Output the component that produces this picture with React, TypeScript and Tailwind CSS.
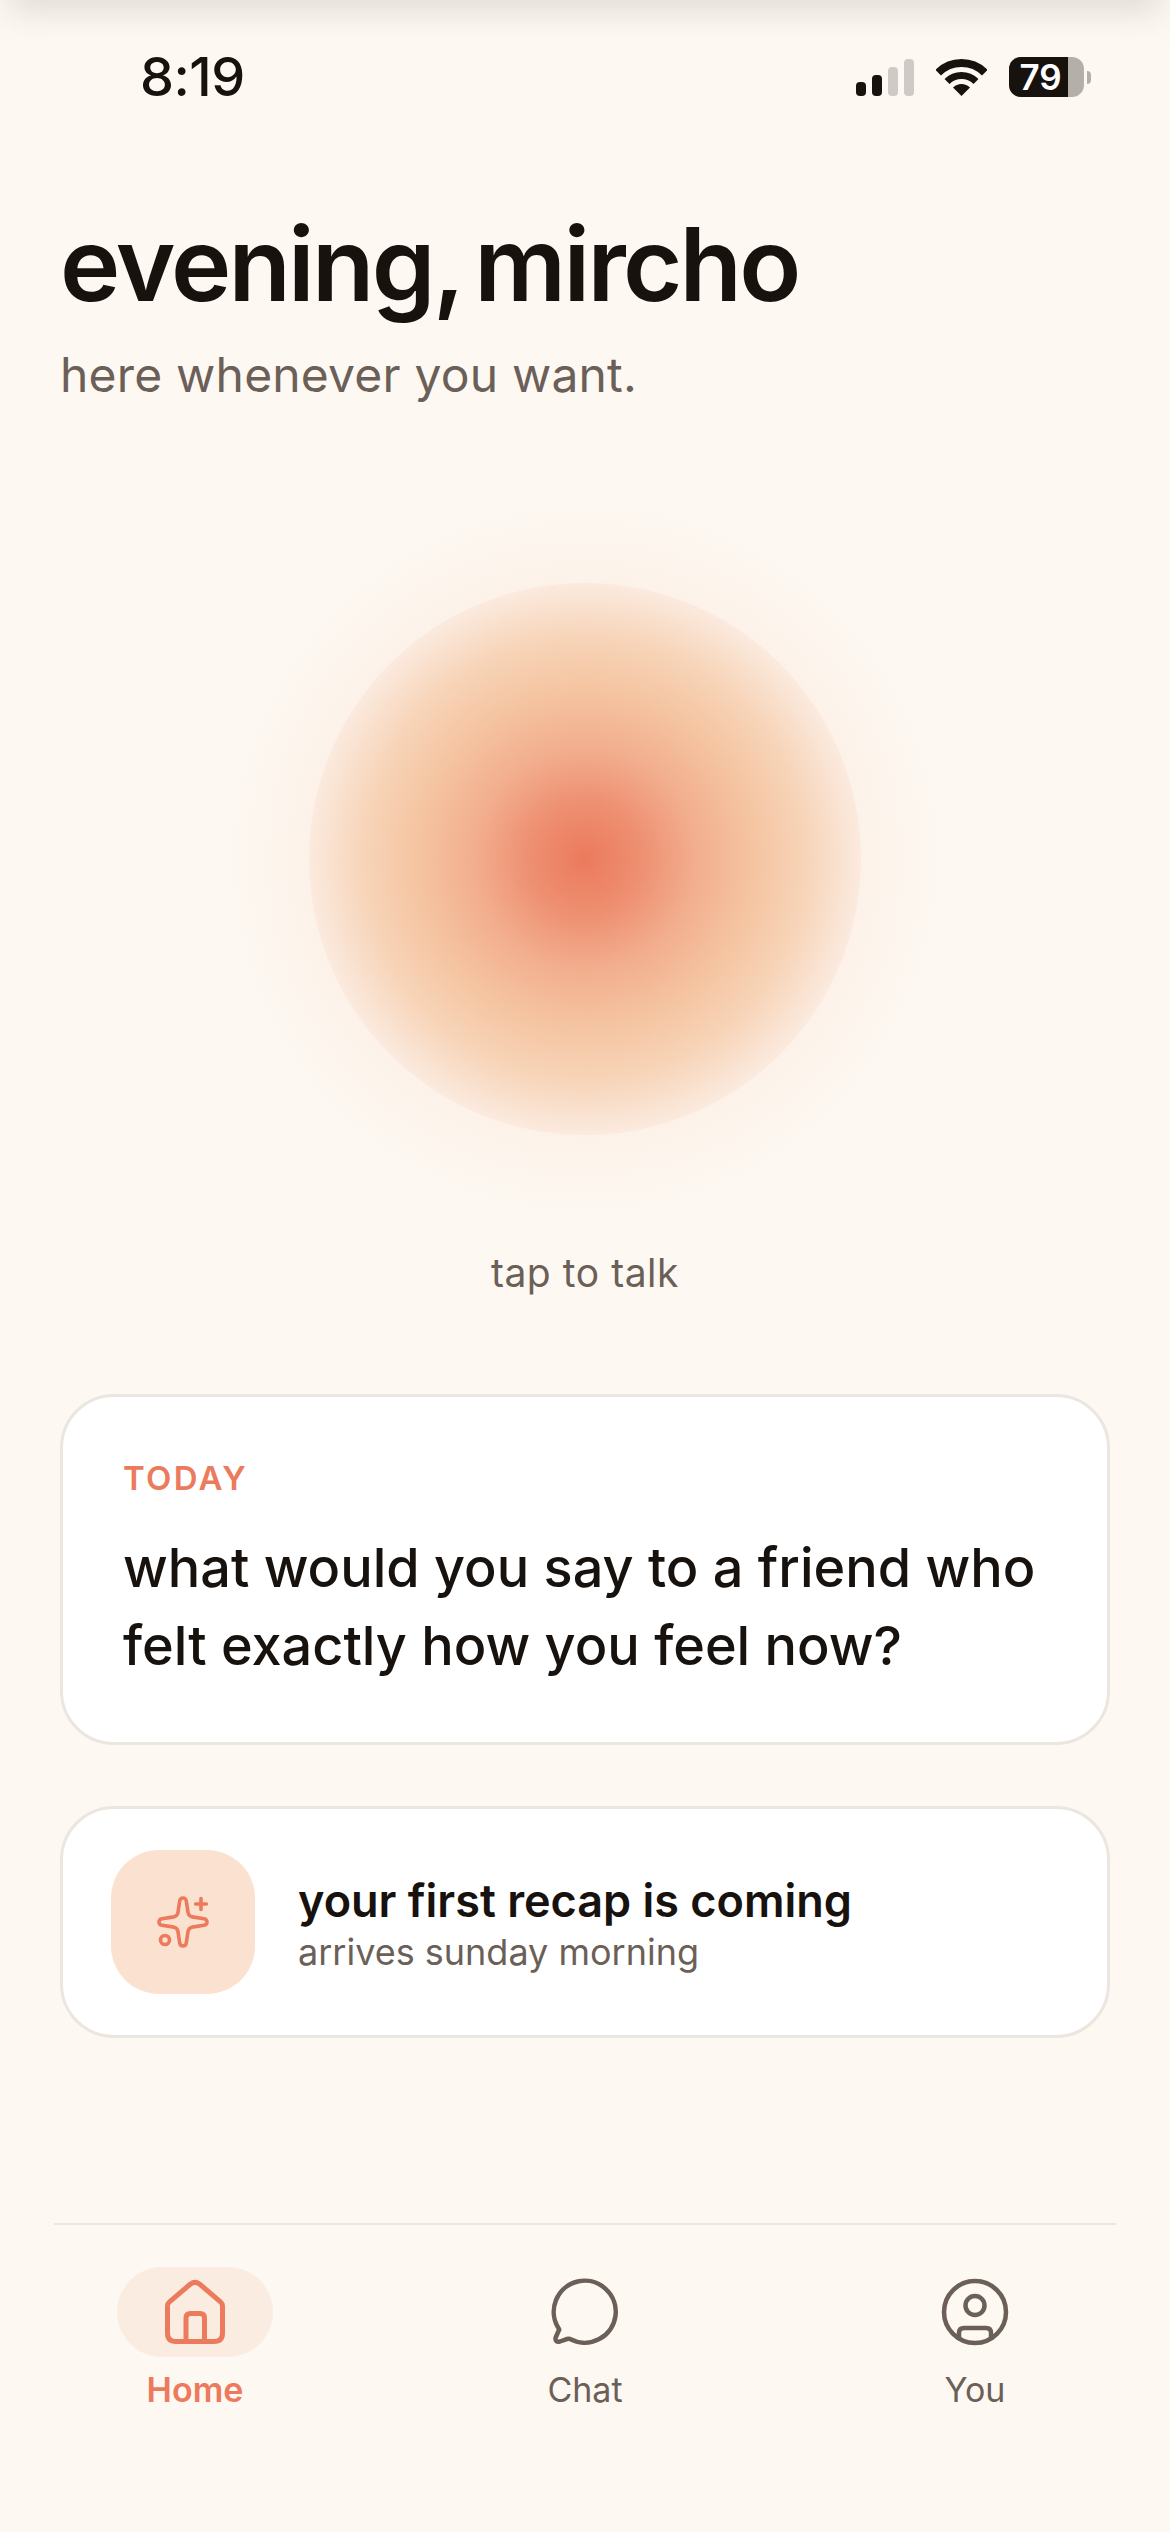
const inter = "font-['Inter','Noto_Sans',sans-serif]";

function Signal() {
  return (
    <div className="flex items-end gap-[6px] h-[37px]">
      <div className="w-[10px] h-[14px] rounded-[4px] bg-[#17120e]" />
      <div className="w-[10px] h-[21px] rounded-[4px] bg-[#17120e]" />
      <div className="w-[10px] h-[29px] rounded-[4px] bg-[#cfcac5]" />
      <div className="w-[10px] h-[37px] rounded-[4px] bg-[#cfcac5]" />
    </div>
  );
}

function Wifi() {
  return (
    <svg width="51" height="37" viewBox="0 0 51 37" fill="none">
      <path d="M2.2 13.7A33 33 0 0 1 48.8 13.7" stroke="#17120e" strokeWidth="8" />
      <path d="M11 22.5A20.5 20.5 0 0 1 40 22.5" stroke="#17120e" strokeWidth="7" />
      <path d="M25.5 37L17 28.5A12 12 0 0 1 34 28.5Z" fill="#17120e" />
    </svg>
  );
}

function Battery() {
  return (
    <div className="flex items-center gap-[3px]">
      <div className="relative flex h-[40px] w-[75px] overflow-hidden rounded-[12px] bg-[#b5afaa]">
        <div className="flex h-full w-[59px] items-center justify-center bg-[#17120e] pl-[4px]">
          <span className={`${inter} text-[35px] font-semibold leading-none text-white`}>79</span>
        </div>
      </div>
      <div className="h-[13px] w-[4px] rounded-r-full bg-[#b5afaa]" />
    </div>
  );
}

function HomeIcon() {
  return (
    <svg width="72" height="72" viewBox="0 0 72 72" fill="none" stroke="#ec7a5c" strokeWidth="5" strokeLinecap="round" strokeLinejoin="round">
      <path d="M8.5 30Q8.5 27.5 10.5 25.8L31.5 8Q36 4.7 40.5 8L61.5 25.8Q63.5 27.5 63.5 30V57Q63.5 65.5 55 65.5H17Q8.5 65.5 8.5 57Z" />
      <path d="M27 65.5V42Q27 37.5 31.5 37.5H41Q45.5 37.5 45.5 42V65.5" />
    </svg>
  );
}

function ChatIcon() {
  return (
    <svg width="72" height="72" viewBox="0 0 72 72" fill="none" stroke="#6b5f57" strokeWidth="4.5" strokeLinecap="round" strokeLinejoin="round">
      <path d="M10 53A31 31 0 1 1 21 63Q19.5 62.5 18 63L11 65.5Q6 66.5 6.5 62L9.5 55Q10.5 54 10 53Z" />
    </svg>
  );
}

function YouIcon() {
  return (
    <svg width="72" height="72" viewBox="0 0 72 72" fill="none" stroke="#6b5f57" strokeWidth="4.5" strokeLinecap="round" strokeLinejoin="round">
      <circle cx="36" cy="36" r="31" />
      <circle cx="36" cy="29.5" r="9.5" />
      <path d="M20 62V57Q20 52 25 52H47Q52 52 52 57V62" />
    </svg>
  );
}

function SparkIcon() {
  return (
    <svg width="72" height="72" viewBox="0 0 24 24" fill="none" stroke="#ec7a5c" strokeWidth="1.2" strokeLinecap="round" strokeLinejoin="round">
      <path d="M12 4C12.6 4 13 4.4 13.1 5L13.7 9Q14 10 15 10.3L19 10.9C19.6 11 20 11.4 20 12C20 12.6 19.6 13 19 13.1L15 13.7Q14 14 13.7 15L13.1 19C13 19.6 12.6 20 12 20C11.4 20 11 19.6 10.9 19L10.3 15Q10 14 9 13.7L5 13.1C4.4 13 4 12.6 4 12C4 11.4 4.4 11 5 10.9L9 10.3Q10 10 10.3 9L10.9 5C11 4.4 11.4 4 12 4Z" />
      <path d="M18 4.2V7.8M16.2 6H19.8" />
      <circle cx="6" cy="18" r="1.5" />
    </svg>
  );
}

function NavItem({ icon, label, active }: { icon: React.ReactNode; label: string; active?: boolean }) {
  return (
    <div className="flex w-[156px] flex-col items-center">
      <div className={`flex h-[90px] w-[156px] items-center justify-center rounded-full ${active ? "bg-[#fbece1]" : ""}`}>
        {icon}
      </div>
      <span className={`${inter} mt-[13px] text-[34px] leading-[40px] ${active ? "font-semibold text-[#ec7a5c]" : "font-normal text-[#6b5f57]"}`}>
        {label}
      </span>
    </div>
  );
}

export default function App() {
  return (
    <div className={`${inter} relative flex h-[2532px] w-[1170px] flex-col overflow-hidden bg-[#fdf8f2]`}>
      <div className="absolute inset-x-[10px] top-[-26px] h-[36px] bg-[#dfd9d4] blur-[16px]" />

      <div className="relative mt-[57px] flex h-[40px] items-center justify-between pl-[140px] pr-[79px]">
        <span className="text-[54px] font-medium leading-none tracking-[-0.01em] text-[#17120e]">8:19</span>
        <div className="flex items-center gap-[22px]">
          <Signal />
          <Wifi />
          <Battery />
        </div>
      </div>

      <div className="px-[60px] pt-[107px]">
        <h1 className="text-[102px] font-semibold leading-[120px] tracking-[-0.027em] [word-spacing:-9px] text-[#17120e]">evening, mircho</h1>
        <p className="mt-[21px] text-[48px] leading-[60px] tracking-[0.004em] text-[#6b5f57]">here whenever you want.</p>
      </div>

      <div className="relative mt-[178px] flex h-[552px] items-center justify-center">
        <div className="absolute left-1/2 top-1/2 h-[760px] w-[760px] -translate-x-1/2 -translate-y-1/2 rounded-full bg-[radial-gradient(circle_closest-side,rgba(251,226,208,0.27)_0%,rgba(251,226,208,0.27)_72.6%,rgba(251,226,208,0)_94%)]" />
        <div className="relative h-[552px] w-[552px] rounded-full bg-[radial-gradient(circle_closest-side,#ec7a5c_0%,#ee8f71_20%,#f2ae8e_40%,#f5c5a2_62%,#f7d4b8_80%,#fae6d7_96%,#fbeade_100%)]" />
      </div>

      <p className="mt-[113px] text-center text-[39px] font-normal leading-[50px] tracking-[0.014em] text-[#6b5f57]">tap to talk</p>

      <div className="mx-[60px] mt-[96px] flex h-[351px] flex-col rounded-[54px] border-[3px] border-[#ece6e0] bg-white px-[60px] pt-[61px]">
        <span className="text-[33px] font-semibold leading-[40px] tracking-[0.07em] text-[#ec7a5c]">TODAY</span>
        <p className="mt-[31px] text-[54px] font-medium leading-[78px] text-[#17120e]">what would you say to a friend who felt exactly how you feel now?</p>
      </div>

      <div className="mx-[60px] mt-[61px] flex h-[232px] items-center gap-[43px] rounded-[54px] border-[3px] border-[#ece6e0] bg-white pl-[48px]">
        <div className="flex h-[144px] w-[144px] items-center justify-center rounded-[48px] bg-[#fbe2d0]">
          <SparkIcon />
        </div>
        <div className="flex flex-col pt-[4px]">
          <span className="text-[45px] font-semibold leading-[56px] text-[#17120e]">your first recap is coming</span>
          <span className="text-[36px] leading-[46px] text-[#6b5f57]">arrives sunday morning</span>
        </div>
      </div>

      <div className="mx-[54px] mt-[185px] flex justify-between border-t-[2px] border-[#ede7e1] px-[63px] pt-[42px]">
        <NavItem active label="Home" icon={<HomeIcon />} />
        <NavItem label="Chat" icon={<ChatIcon />} />
        <NavItem label="You" icon={<YouIcon />} />
      </div>
    </div>
  );
}
